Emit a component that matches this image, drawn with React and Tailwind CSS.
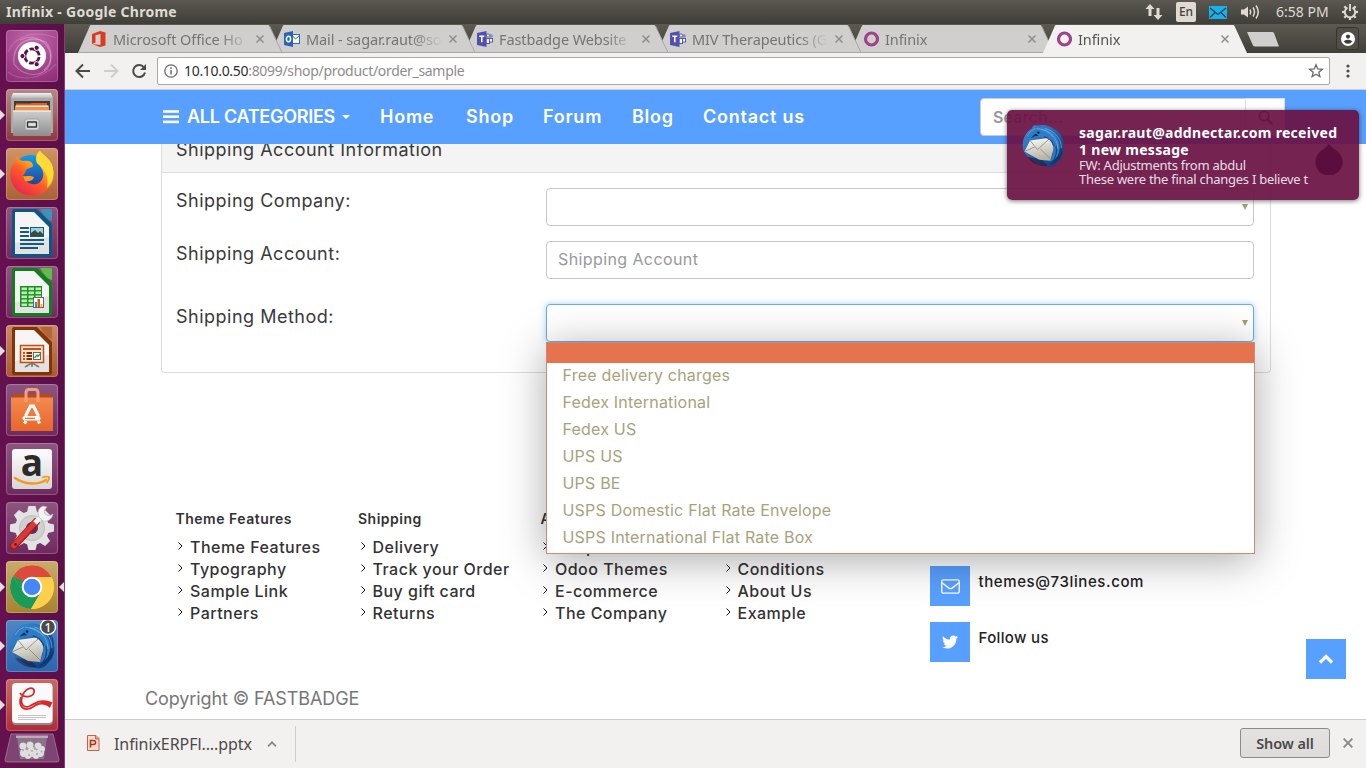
import React from "react";

const UI = "font-['Noto_Sans',sans-serif]";

/* ---------- launcher icons ---------- */
const Spread = () => (
  <svg viewBox="0 0 52 52" className="size-full">
    <g fill="none" stroke="#fff" strokeOpacity=".28" strokeWidth="1.2">
      <path d="M8 34C6 14 22 4 40 12C48 22 46 34 38 40" />
      <path d="M14 10C30 2 48 14 44 34" />
      <path d="M44 34C38 48 18 48 8 34" />
      <path d="M2 22C10 4 30 0 50 8M2 42C12 50 34 52 50 34" strokeOpacity=".15" />
    </g>
    <circle cx="26" cy="26" r="14" fill="#fff" />
    <circle cx="26" cy="26" r="7.2" fill="none" stroke="#5a1145" strokeWidth="2.8" strokeDasharray="13.1 2" strokeDashoffset="-1" />
    <g fill="#5a1145" stroke="#fff" strokeWidth="1">
      <circle cx="16.5" cy="26" r="2.6" />
      <circle cx="30.7" cy="17.8" r="2.6" />
      <circle cx="30.7" cy="34.2" r="2.6" />
    </g>
  </svg>
);
const Files = () => (
  <svg viewBox="0 0 52 52" className="size-full">
    <defs>
      <linearGradient id="cab" x2="0" y2="1"><stop stopColor="#cfcfcf" /><stop offset="1" stopColor="#8d8d8d" /></linearGradient>
      <linearGradient id="lid" x2="0" y2="1"><stop stopColor="#f4f4f4" /><stop offset="1" stopColor="#b9b9b9" /></linearGradient>
    </defs>
    <path d="M8 4H44L47 9V44H5V9Z" fill="#a9a9a9" />
    <path d="M7 4H45L47 9H5Z" fill="url(#lid)" />
    <rect x="8" y="12" width="36" height="12" fill="#3d3a38" />
    <path d="M10 14.500H24L26 14H41V24H10Z" fill="#d9602a" />
    <path d="M9 16.500H43V24H9Z" fill="#f0924a" />
    <rect x="10" y="16.500" width="32" height="1.500" fill="#fbe9d5" />
    <rect x="7" y="21.500" width="38" height="25.500" rx="1" fill="url(#cab)" />
    <rect x="7" y="21.500" width="38" height="1.200" fill="#eee" />
    <rect x="19" y="30" width="14" height="11" rx="2" fill="#d9d9d9" stroke="#9a9a9a" strokeWidth=".8" />
    <rect x="21.500" y="33" width="9" height="5" rx=".5" fill="#ddd" stroke="#333" strokeWidth="1.4" />
  </svg>
);
const Firefox = () => (
  <svg viewBox="0 0 52 52" className="size-full">
    <defs>
      <linearGradient id="ffy" x1=".9" y1="0" x2=".2" y2="1"><stop stopColor="#ffe226" /><stop offset=".35" stopColor="#ffb01d" /><stop offset=".6" stopColor="#ff5a2a" /><stop offset="1" stopColor="#e8214f" /></linearGradient>
      <linearGradient id="ffb" x2="0" y2="1"><stop stopColor="#0aa0ef" /><stop offset="1" stopColor="#2b2f86" /></linearGradient>
    </defs>
    <circle cx="25" cy="25" r="18" fill="url(#ffb)" />
    <path d="M9 14C9 11 10 9 11 8C12 11 14 12 17 13C22 12 27 13 27 18C26 20 22 20 20 22C20 24 18 26 17 28C19 36 30 39 35 33C39 28 38 21 31 15C29 9 31 5 34 3C37 7 44 11 46 17C50 27 47 39 38 44C28 51 13 48 7 37C2 29 4 19 9 14Z" fill="url(#ffy)" />
    <path d="M31 15C29 9 31 5 34 3C37 7 44 11 46 17C49 26 47 34 41 40C43 31 41 23 31 15Z" fill="#ffdb35" />
    <path d="M17 28C20 29 24 27 28 29C27 33 22 34 19 33Z" fill="#ff9a1f" />
  </svg>
);
const Doc = ({ c, d, children }) => (
  <svg viewBox="0 0 52 52" className="size-full">
    <path d="M8 2H31L46 17V48Q46 50 44 50H8Q6 50 6 48V4Q6 2 8 2Z" fill={d} />
    <path d="M34 2H46V14Q40 13 34 2Z" fill={c} />
    <path d="M9 5H28L43 20V47H9Z" fill="#f5f5f5" />
    <path d="M9 36L43 30V47H9Z" fill="#e2e2e2" />
    {children}
  </svg>
);
const Writer = () => (
  <Doc c="#3c93b8" d="#0a5884">
    <g fill="#165a82">
      <rect x="14" y="20" width="9" height="2" /><rect x="14" y="24" width="9" height="2" /><rect x="14" y="28" width="9" height="2" />
      <rect x="14" y="32" width="24" height="2" /><rect x="14" y="36" width="24" height="2" /><rect x="14" y="40" width="18" height="2" />
      <rect x="24" y="20" width="14" height="10" />
    </g>
    <rect x="25" y="21" width="12" height="8" fill="#9bd0ee" />
    <path d="M25 29V26L29 23L32 26L34 24L37 27V29Z" fill="#394d3b" /><circle cx="34.500" cy="23" r="1" fill="#f7d24a" />
  </Doc>
);
const Calc = () => (
  <Doc c="#5cc046" d="#12801a">
    <rect x="14" y="20" width="22" height="21" fill="#1d8f24" />
    <g fill="#b7efae">
      {[21.5, 25.5, 29.5, 33.5, 37.5].map((y) => [15.5, 22.5, 29.5].map((x) => <rect key={x + "-" + y} x={x} y={y} width="5.5" height="2.6" />))}
    </g>
    <rect x="27.500" y="31.500" width="10" height="10" fill="#fff" stroke="#666" />
    <rect x="29" y="36" width="2" height="5" fill="#2c8fd8" /><rect x="31.500" y="33" width="2.500" height="8" fill="#d9561b" /><rect x="34.500" y="38" width="2" height="3" fill="#f2b71c" />
  </Doc>
);
const Impress = () => (
  <Doc c="#b5653a" d="#843406">
    <rect x="14.500" y="20.500" width="23" height="17" fill="#fbe3d2" stroke="#bf4d12" strokeWidth="1.500" />
    <g fill="#c2531a"><rect x="17" y="23" width="18" height="2" /><rect x="17" y="27" width="2" height="2" /><rect x="17" y="30" width="2" height="2" /><rect x="17" y="33" width="2" height="2" /></g>
    <g fill="#7d3005"><rect x="20.500" y="27" width="5.500" height="2" /><rect x="20.500" y="30" width="5.500" height="2" /><rect x="20.500" y="33" width="5.500" height="2" /></g>
    <rect x="27.500" y="27.500" width="7" height="7" fill="#fff" stroke="#666" /><path d="M28.500 33L31 30L32 31.500L34 29" stroke="#2a9b2a" strokeWidth="1.300" fill="none" />
    <path d="M19 42L24 39H28L33 42M26 38V42" stroke="#777" strokeWidth="1.600" fill="none" />
  </Doc>
);
const Software = () => (
  <svg viewBox="0 0 52 52" className="size-full">
    <defs><linearGradient id="bag" x2="0" y2="1"><stop stopColor="#f38a4d" /><stop offset="1" stopColor="#e9662a" /></linearGradient></defs>
    <path d="M7 10H45L47 14H5Z" fill="#b9491b" />
    <path d="M5 13.500H47V47H5Z" fill="url(#bag)" />
    <path d="M20 18V9Q20 5.500 23 5.500H29Q32 5.500 32 9V18" fill="none" stroke="#f0a17c" strokeWidth="3" />
    <path d="M19.500 32L24.500 22H27.500L32.500 32M20 37L18.500 39.500M32.500 37L33.500 39.500" fill="none" stroke="#fff" strokeWidth="3.200" />
    <rect x="16.500" y="32" width="18" height="4.600" rx="2.300" fill="#fff" /><path d="M19 34.300H29" stroke="#e9662a" strokeWidth="1.200" />
  </svg>
);
const Amazon = () => (
  <svg viewBox="0 0 52 52" className="size-full">
    <defs><linearGradient id="az" x2="0" y2="1"><stop stopColor="#fdfdfd" /><stop offset="1" stopColor="#d7d7d7" /></linearGradient></defs>
    <rect x="6" y="6" width="40" height="40" rx="3" fill="url(#az)" />
    <text x="26" y="32.500" textAnchor="middle" fontFamily="Open Sans" fontWeight="700" fontSize="37" fill="#2b2b2b">a</text>
    <path d="M9 35C19 42 32 42 40 37" fill="none" stroke="#f79a1c" strokeWidth="2.600" strokeLinecap="round" />
    <path d="M36 34.500Q40 33 43 34Q43.500 37 40.500 40" fill="none" stroke="#f79a1c" strokeWidth="1.800" />
  </svg>
);
const Settings = () => (
  <svg viewBox="0 0 52 52" className="size-full">
    <g fill="#e3e3e3">
      {[0, 45, 90, 135].map((a) => <path key={a} transform={`rotate(${a} 26 26)`} d="M21 10L22.500 4H29.500L31 10V42L29.500 48H22.500L21 42Z" />)}
      <circle cx="26" cy="26" r="17" />
    </g>
    <circle cx="26" cy="26" r="12.500" fill="#d0d0d0" stroke="#bdbdbd" />
    <circle cx="26" cy="26" r="6" fill="#6e2a5c" />
    <path d="M7.500 44.500L30 20" stroke="#a11b1b" strokeWidth="7.500" strokeLinecap="round" />
    <path d="M8 43.500L30 19.500" stroke="#d93a38" strokeWidth="5.500" strokeLinecap="round" />
    <path d="M29 21L36 14" stroke="#f2f2f2" strokeWidth="5" />
    <path d="M37 4C32 6 31 11 33 15L37 19C42 20 46 17 47 12L43 14L39 12L38 9L41 5Z" fill="#f4f4f4" stroke="#b5b5b5" strokeWidth=".7" />
    <circle cx="9.500" cy="42.500" r="1.400" fill="#801515" />
  </svg>
);
const Chrome = () => (
  <svg viewBox="0 0 52 52" className="size-full">
    <circle cx="26" cy="26" r="22" fill="#fdd04b" />
    <path d="M26 16H45.500A22 22 0 0 0 7 15L26 26Z" fill="#dc4a3d" />
    <path d="M7 15A22 22 0 0 0 25 48L35 31L26 26L17.500 31Z" fill="#1b9b5a" />
    <path d="M7 15L17.500 32L21 22Z" fill="#1b9b5a" />
    <path d="M26 16H45.500A22 22 0 0 1 25 48L35 31Z" fill="#fdd04b" />
    <circle cx="26" cy="26" r="10.300" fill="#fff" />
    <circle cx="26" cy="26" r="8.300" fill="#4587f4" />
  </svg>
);
const Bird = ({ badge }) => (
  <svg viewBox="0 0 52 52" className="size-full">
    <defs>
      <linearGradient id="tb" x2="1" y2="1"><stop stopColor="#3f93d8" /><stop offset=".55" stopColor="#1f5ea8" /><stop offset="1" stopColor="#102f66" /></linearGradient>
      <linearGradient id="env" x2=".3" y2="1"><stop stopColor="#fff" /><stop offset="1" stopColor="#b9b4a6" /></linearGradient>
    </defs>
    <path d="M14 7C15 4 17 3 19 4C27 2 33 4 37 7C43 9 49 17 48 26C49 32 47 39 42 43C39 48 32 50 28 47C22 47 17 43 14 40C8 38 4 32 4 26C4 18 7 11 14 7Z" fill="url(#tb)" />
    <path d="M9 38C15 46 24 49 31 47L24 40Z" fill="#1c0f1c" fillOpacity=".45" />
    <path d="M12 20L33 17L38 27L34 42L22 41L6 32Z" fill="url(#env)" />
    <path d="M12 20L20 30L33 18M6 32L17 27M23 29L35 41" fill="none" stroke="#8e8a80" strokeWidth=".9" />
    <path d="M11 19C16 15 20 16 24 17C31 15 36 20 37 27C38 33 36 38 33 43C41 41 45 34 44 26C43 15 34 6 24 5C17 5 11 8 8 14C5 19 4 24 5 29C6 25 8 22 11 19Z" fill="#2f7cc4" />
    <path d="M13 17L18 12.500L21 15Q17 15 13 17Z" fill="#0d2b55" /><circle cx="21" cy="11.500" r="1.300" fill="#0b1d3c" />
    <g fill="none" stroke="#7cbdee" strokeOpacity=".65"><path d="M24 8C34 9 42 18 42 29M28 7C38 9 46 18 46 28M19 7Q30 8 37 16M9 15Q12 9 18 7" /></g>
    <g fill="none" stroke="#0f3264" strokeOpacity=".75" strokeWidth="1.300"><path d="M34 46Q44 40 45 29M37 42Q42 35 40 26M27 16Q35 18 38 26M38 44Q46 37 47 31" /></g>
    {badge && <><circle cx="42" cy="7" r="7.500" fill="#4a4a4a" stroke="#fff" strokeWidth="1.400" />
      <text x="42" y="11.500" textAnchor="middle" fontFamily="Noto Sans" fontWeight="500" fontSize="12" fill="#fff">1</text></>}
  </svg>
);
const Pdf = () => (
  <svg viewBox="0 0 52 52" className="size-full">
    <rect x="6" y="5" width="41" height="41" rx="4" fill="#8f8f8f" />
    <rect x="6" y="4" width="40.500" height="40" rx="4" fill="#fafafa" />
    <path d="M14 14C18 20 30 18 28 11C26 7 18 10 16 18C14 25 18 30 24 27C31 23 36 20 46 24" fill="none" stroke="#d9272b" strokeWidth="1.800" />
    <path d="M16 18C13 26 18 32 25 28C31 24 36 21 46 24L44 29C37 23 31 26 26 29.500C17 34 11 27 14 18Z" fill="#d9272b" />
    <path d="M12 36.500H40M12 38.500H40M12 40.500H30" stroke="#c4c4c4" strokeWidth="1" />
  </svg>
);

const TILES = [
  { I: Spread, bg: "bg-[radial-gradient(circle_at_50%_20%,#c46aae,#8b2a74)]" },
  { I: Files, bg: "bg-linear-to-b from-[#b48a86] to-[#8e3540]", run: true },
  { I: Firefox, bg: "bg-linear-to-b from-[#cf9466] to-[#aa6237]", run: true },
  { I: Writer, bg: "bg-linear-to-b from-[#8d5580] to-[#6f2a60]" },
  { I: Calc, bg: "bg-linear-to-b from-[#8d5580] to-[#6f2a60]" },
  { I: Impress, bg: "bg-linear-to-b from-[#c98a68] to-[#a85930]", run: true },
  { I: Software, bg: "bg-linear-to-b from-[#8d5580] to-[#6f2a60]" },
  { I: Amazon, bg: "bg-linear-to-b from-[#8d5580] to-[#6f2a60]" },
  { I: Settings, bg: "bg-linear-to-b from-[#8d5580] to-[#6f2a60]" },
  { I: Chrome, bg: "bg-linear-to-b from-[#c9ac6b] to-[#a6832e]", run: true, focus: true },
  { I: () => <Bird badge />, bg: "bg-linear-to-b from-[#4f87c4] to-[#2d65ae]", run: true },
  { I: Pdf, bg: "bg-linear-to-b from-[#c76a66] to-[#b02a35]", run: true },
];

const Launcher = () => (
  <aside className="relative flex w-[65px] shrink-0 flex-col gap-[7px] border-r border-[#86406f] bg-linear-to-r from-[#66114f] to-[#5b0f48] pt-[6px]">
    {TILES.map(({ I, bg, run, focus }, i) => (
      <div key={i} className="flex h-[52px] items-center">
        <svg viewBox="0 0 6 10" className="h-[10px] w-[6px] shrink-0">{run && <path d="M0 0L5 5L0 10Z" fill="#e3dfdf" />}</svg>
        <div className={`size-[52px] shrink-0 rounded-[4px] shadow-[inset_0_0_0_1px_rgba(255,255,255,0.22)] ${bg}`}><I /></div>
        <svg viewBox="0 0 6 10" className="h-[10px] w-[6px] shrink-0">{focus && <path d="M6 0L1 5L6 10Z" fill="#e3dfdf" />}</svg>
      </div>
    ))}
    <svg viewBox="0 0 56 30" className="-mt-[5px] ml-[4px] h-[30px] w-[56px] shrink-0">
      <path d="M7 1H49L55 27Q55 29 53 29H3Q1 29 1 27Z" fill="#7e4473" stroke="#a37a9a" strokeWidth=".8" />
      <path d="M13 4H43L40 26H16Z" fill="#8d7288" />
      <path d="M12 2.500H44V5H12Z" fill="#b9adb7" />
      <g fill="#dedede"><circle cx="19" cy="13" r="3.500" /><circle cx="26" cy="12" r="3.500" /><circle cx="34" cy="13" r="3.500" /><circle cx="38" cy="16" r="3" /><circle cx="20" cy="20" r="4" /><circle cx="28" cy="19" r="5" /><circle cx="36" cy="20" r="4" /><circle cx="24" cy="23" r="3" /><circle cx="32" cy="23" r="3" /></g>
      <g fill="#a9a3a8"><circle cx="23" cy="15.500" r="1.200" /><circle cx="31" cy="15.500" r="1.200" /><circle cx="25" cy="22" r="1" /><circle cx="33" cy="21" r="1.100" /><circle cx="37.500" cy="18.500" r=".9" /><circle cx="19" cy="17" r="1" /><circle cx="28" cy="18" r=".9" /></g>
    </svg>
  </aside>
);

/* ---------- top panel ---------- */
const TopPanel = () => (
  <header className={`flex h-[24px] shrink-0 items-center bg-linear-to-b from-[#5a5850] to-[#3f3e39] pl-[6px] text-[#dfdbd2] ${UI}`}>
    <span className="grow text-[14px] leading-[20px] font-bold tracking-[0.27px]">Infinix - Google Chrome</span>
    <svg viewBox="0 0 18 18" className="mr-[13px] size-[18px]" fill="#dfdbd2">
      <path d="M5 1L9.500 6H6.500V13H3.500V6H.5Z" /><path d="M13 17L17.500 12H14.500V5H11.500V12H8.500Z" />
    </svg>
    <span className="mr-[13px] flex h-[20px] w-[20px] items-center justify-center rounded-[2px] bg-[#dfdbd2] text-[12px] font-medium text-[#45433e]">En</span>
    <svg viewBox="0 0 18 13" className="mr-[13px] h-[13px] w-[18px]">
      <rect width="18" height="13" fill="#19b1ec" /><path d="M1 2L9 8.500L17 2M1 11.500L6 6.500M17 11.500L12 6.500" fill="none" stroke="#33424a" strokeWidth="1.300" />
    </svg>
    <svg viewBox="0 0 20 18" className="mr-[16px] h-[18px] w-[20px]">
      <path d="M1 6.500H4L8 3.500V14.500L4 11.500H1Z" fill="#dfdbd2" />
      <g fill="none" stroke="#dfdbd2" strokeWidth="1.500"><path d="M10 6.500Q11.500 9 10 11.500" /><path d="M13 4.500Q16 9 13 13.500" /><path d="M16 2.500Q20.500 9 16 15.500" /></g>
    </svg>
    <span className="w-[65px] text-[14px] leading-[20px]">6:58 PM</span>
    <svg viewBox="0 0 18 18" className="mr-[7px] size-[18px]">
      <g stroke="#dfdbd2" strokeWidth="2.200">
        {[45, 90, 135, 180, 225, 270, 315].map((a) => <path key={a} transform={`rotate(${a} 9 9)`} d="M9 1V4" />)}
      </g>
      <path d="M6.500 4.600A5.200 5.200 0 1 0 11.500 4.600" fill="none" stroke="#dfdbd2" strokeWidth="1.900" />
      <path d="M9 1V8" stroke="#dfdbd2" strokeWidth="1.900" />
    </svg>
  </header>
);

/* ---------- browser tabs ---------- */
const Office = () => <svg viewBox="0 0 16 16" className="size-[16px]"><path d="M1 3L9 0L14.500 1.500V14.500L9 16L1 13L9.500 14V3L4.500 4.300V11.500L1 13Z" fill="#dc3b21" /></svg>;
const Outlook = () => (
  <svg viewBox="0 0 16 16" className="size-[16px]">
    <rect x="8" y="3.500" width="7.500" height="9" fill="#fff" stroke="#2b66b8" /><path d="M8 4.500L11.500 8L15.500 4.500" fill="none" stroke="#2b66b8" />
    <path d="M0 2L9 0V16L0 14Z" fill="#2764ba" /><ellipse cx="4.500" cy="8" rx="2.100" ry="2.700" fill="none" stroke="#fff" strokeWidth="1.500" />
  </svg>
);
const Teams = () => (
  <svg viewBox="0 0 16 16" className="size-[16px]">
    <g fill="#fff" stroke="#5558af"><circle cx="11" cy="4.500" r="1.600" /><circle cx="14" cy="5" r="1.200" /><rect x="9" y="7.500" width="3.500" height="5" /><rect x="12.500" y="7.500" width="3" height="3.500" /></g>
    <path d="M0 2L9.500 0V16L0 14Z" fill="#5451ad" />
    <path d="M2.300 5.300H7.300M4.800 5.300V11.300" stroke="#fff" strokeWidth="1.500" />
  </svg>
);
const Ring = () => <svg viewBox="0 0 16 16" className="size-[16px]"><circle cx="8.500" cy="8" r="6" fill="none" stroke="#9c4489" strokeWidth="3.200" /></svg>;
const Cross = ({ cls }) => <svg viewBox="0 0 8 8" className={cls}><path d="M.5.5L7.500 7.500M7.500.5L.5 7.500" stroke="currentColor" strokeWidth="1.500" /></svg>;

const TABS = [
  { t: "Microsoft Office Ho", I: Office, z: "z-[6]" },
  { t: "Mail - sagar.raut@so", I: Outlook, z: "z-[5]" },
  { t: "Fastbadge Website", I: Teams, z: "z-[4]" },
  { t: "MIV Therapeutics (G", I: Teams, z: "z-[3]" },
  { t: "Infinix", I: Ring, z: "z-[2]" },
  { t: "Infinix", I: Ring, z: "z-[7]", on: true },
];
const TabStrip = () => (
  <div className={`flex h-[29px] shrink-0 bg-linear-to-b from-[#5c5a50] to-[#403f3a] pl-[13px] ${UI}`}>
    {TABS.map(({ t, I, z, on }, i) => (
      <div key={i} className={`relative -mr-[12px] flex w-[205px] shrink-0 items-center ${z}`}>
        <svg viewBox="0 0 205 29" className="absolute inset-0 h-[29px] w-[205px]">
          <path d="M0 29L12 1.500Q12.500 1 13 1H190Q191 1 191.500 2L204 29Z" fill={on ? "#f2f1f0" : "#d1cfcd"} />
          {!on && <path d="M0 28.500H204L191.500 2" fill="none" stroke="#a9a7a4" />}
        </svg>
        <span className="relative ml-[13px] flex w-[22px] justify-start"><I /></span>
        <span className={`relative w-[136px] overflow-hidden mask-[linear-gradient(to_right,#000_108px,transparent_136px)] text-[14.500px] leading-[20px] tracking-[-0.1px] whitespace-nowrap ${on ? "text-[#55534f]" : "text-[#767472]"}`}>{t}</span>
        <Cross cls="relative ml-[7px] size-[8px] text-[#8f8d8a]" />
      </div>
    ))}
    <svg viewBox="0 0 34 17" className="mt-[7px] ml-[10px] h-[17px] w-[34px]"><path d="M1 1H26Q27.500 1 28 2L33 15.500H9Q7.500 15.500 7 14.500Z" fill="#d1cfcd" /></svg>
    <span className="mt-[3px] mr-[7px] ml-auto flex size-[23px] items-center justify-center rounded-[3px] border border-[#37352f] bg-[#504e47]">
      <svg viewBox="0 0 14 14" className="size-[14px]"><circle cx="7" cy="7" r="7" fill="#fff" /><circle cx="7" cy="4.600" r="2.100" fill="#3f3e39" /><path d="M2.800 9.200Q7 6.400 11.200 9.200Q10 11.700 7 11.700Q4 11.700 2.800 9.200Z" fill="#3f3e39" /></svg>
    </span>
  </div>
);

const Toolbar = () => (
  <div className={`flex h-[37px] shrink-0 items-center border-b border-[#cfcdca] bg-[#f2f1f0] pl-[10px] ${UI}`}>
    <svg viewBox="0 0 16 16" className="size-[16px]"><path d="M15 8H2M8 1.500L1.500 8L8 14.500" fill="none" stroke="#4b4a48" strokeWidth="2" /></svg>
    <svg viewBox="0 0 16 16" className="ml-[12px] size-[16px]"><path d="M1 8H14M8 1.500L14.500 8L8 14.500" fill="none" stroke="#cfcecc" strokeWidth="2" /></svg>
    <svg viewBox="0 0 16 16" className="ml-[12px] size-[16px]"><path d="M13 4.500A6 6 0 1 0 14 9.500" fill="none" stroke="#4b4a48" strokeWidth="2" /><path d="M15 1V7H9Z" fill="#4b4a48" /></svg>
    <div className="ml-[10px] flex h-[28px] w-[1173px] items-center rounded-[2px] border border-[#aaa8a6] bg-white pl-[6px]">
      <svg viewBox="0 0 14 14" className="size-[14px]"><circle cx="7" cy="7" r="6.200" fill="none" stroke="#6b6a68" strokeWidth="1.300" /><path d="M7 6V10.500M7 3.300V4.900" stroke="#6b6a68" strokeWidth="1.500" /></svg>
      <span className="ml-[6px] grow text-[14px] leading-[20px] tracking-[-0.31px] text-[#8e8c8a]"><span className="text-[#2f2e2d]">10.10.0.50</span>:8099/shop/product/order_sample</span>
      <svg viewBox="0 0 16 16" className="mr-[5px] size-[16px]"><path d="M8 1.800L9.700 6L14.300 6.300L10.800 9.200L11.900 13.700L8 11.200L4.100 13.700L5.200 9.200L1.700 6.300L6.300 6Z" fill="none" stroke="#6b6a68" strokeWidth="1.300" /></svg>
    </div>
    <svg viewBox="0 0 4 14" className="ml-[16px] h-[14px] w-[4px]" fill="#4b4a48"><circle cx="2" cy="2" r="1.600" /><circle cx="2" cy="7" r="1.600" /><circle cx="2" cy="12" r="1.600" /></svg>
  </div>
);

/* ---------- site ---------- */
const SiteNav = () => (
  <nav className="flex h-[54px] shrink-0 items-center bg-[#58a0ff] pl-[98px] text-[18px] leading-[24px] font-semibold tracking-[0.75px] whitespace-nowrap text-white">
    <svg viewBox="0 0 16 14" className="mr-[8px] h-[14px] w-[16px] shrink-0" fill="#fff"><rect width="16" height="2.600" y=".2" /><rect width="16" height="2.600" y="5.400" /><rect width="16" height="2.600" y="10.600" /></svg>
    <span className="w-[155px] shrink-0 tracking-[-0.27px]">ALL CATEGORIES</span>
    <svg viewBox="0 0 8 4" className="mr-[30px] h-[4px] w-[8px] shrink-0"><path d="M0 0H8L4 4Z" fill="#fff" /></svg>
    <span className="w-[86px] shrink-0">Home</span>
    <span className="w-[77px] shrink-0">Shop</span>
    <span className="w-[89px] shrink-0">Forum</span>
    <span className="w-[71px] shrink-0">Blog</span>
    <span className="w-[277px] shrink-0">Contact us</span>
    <div className="flex h-[38px] w-[266px] shrink-0 items-center rounded-l-[4px] border border-[#ccc] bg-white pl-[12px] text-[16px] tracking-[0.1px] text-[#999]">Search...</div>
    <div className="-ml-px flex h-[38px] w-[40px] shrink-0 items-center justify-center border border-[#ddd] bg-white">
      <svg viewBox="0 0 16 16" className="size-[15px]"><circle cx="6.500" cy="6.500" r="5" fill="none" stroke="#333" strokeWidth="2" /><path d="M10.500 10.500L14.500 14.500" stroke="#333" strokeWidth="2.500" strokeLinecap="round" /></svg>
    </div>
  </nav>
);

const OPTIONS = ["Free delivery charges", "Fedex International", "Fedex US", "UPS US", "UPS BE", "USPS Domestic Flat Rate Envelope", "USPS International Flat Rate Box"];
const Caret = () => <svg viewBox="0 0 6 6" className="size-[6px]"><path d="M0 0H6L3 6Z" fill="#a39f78" /></svg>;

const Row = ({ label, children }) => (
  <div className="flex h-[38px]">
    <span className="w-[370px] shrink-0 text-[18px] leading-[25px] tracking-[0.5px]">{label}</span>
    {children}
  </div>
);

const ShippingPanel = () => (
  <section className="ml-[96px] h-[229px] w-[1110px] shrink-0 rounded-b-[4px] border border-t-0 border-[#ddd] bg-white text-[#3a3a3a]">
    <h3 className="h-[29px] overflow-hidden border-b border-[#ddd] bg-[#f4f4f4] pl-[14px] text-[18px] leading-[11px] tracking-[0.5px]">Shipping Account Information</h3>
    <div className="flex flex-col gap-[15px] pt-[15px] pl-[14px]">
      <Row label="Shipping Company:">
        <div className="flex h-[38px] w-[708px] items-center justify-end rounded-[4px] border border-[#c8c8c8] bg-white pr-[5px]"><Caret /></div>
      </Row>
      <Row label="Shipping Account:">
        <div className="flex h-[38px] w-[708px] items-center rounded-[4px] border border-[#c8c8c8] bg-white pb-[2px] pl-[11px] text-[16px] tracking-[0.4px] text-[#999]">Shipping Account</div>
      </Row>
      <div className="mt-[10px]">
        <Row label="Shipping Method:">
          <div className="relative flex h-[38px] w-[708px] items-center justify-end rounded-[4px] border border-[#66afe9] bg-white pr-[5px] shadow-[0_0_6px_rgba(102,175,233,0.55)]">
            <Caret />
            <div className="absolute top-[37px] -left-px z-20 h-[212px] w-[709px] border border-[#c98b78] bg-white shadow-[0_6px_40px_rgba(0,0,0,0.34)]">
              <div className="h-[20px] bg-[#e5734e]" />
              {OPTIONS.map((o) => <div key={o} className="h-[27px] pl-[15.500px] text-[16px] leading-[24px] tracking-[0.2px] text-[#a8a27c]">{o}</div>)}
            </div>
          </div>
        </Row>
      </div>
    </div>
  </section>
);

const COLS = [
  ["Theme Features", ["Theme Features", "Typography", "Sample Link", "Partners"]],
  ["Shipping", ["Delivery", "Track your Order", "Buy gift card", "Returns"]],
  ["A", ["Shop", "Odoo Themes", "E-commerce", "The Company"]],
  ["\u00a0", ["\u00a0", "Conditions", "About Us", "Example"]],
];
const Footer = () => (
  <footer className="mt-[135px]">
    <div className="flex pl-[110.500px]">
      {COLS.map(([h, ls]) => (
        <div key={h} className="w-[182.500px] shrink-0 text-[#333]">
          <h4 className="mb-[6px] text-[14px] leading-[22px] font-semibold tracking-[0.5px]">{h}</h4>
          {ls.map((l) => (
            <div key={l} className="flex items-center pl-[2.500px] text-[16px] leading-[22px] font-medium tracking-[0.48px] whitespace-nowrap">
              <svg viewBox="0 0 5 8" className="mr-[7px] mb-[2px] h-[8px] w-[5px] shrink-0"><path d="M.5.5L4 4L.5 7.500" fill="none" stroke="#111" /></svg>{l}
            </div>
          ))}
        </div>
      ))}
      <div className="ml-[24.500px] flex flex-col gap-[16px] pt-[58px] text-[15px] leading-[31px] font-medium tracking-[0.6px] text-[#222]">
        <div className="flex h-[40px] gap-[8.500px]">
          <span className="flex size-[40px] items-center justify-center bg-[#58a0ff]">
            <svg viewBox="0 0 18 14" className="h-[15px] w-[19px]"><rect x=".7" y=".7" width="16.600" height="12.600" rx="1.500" fill="none" stroke="#fff" strokeWidth="1.300" /><path d="M1 3.500L7.500 8.500Q9 9.500 10.500 8.500L17 3.500" fill="none" stroke="#fff" strokeWidth="1.300" /></svg>
          </span>
          themes@73lines.com
        </div>
        <div className="flex h-[40px] gap-[8.500px] tracking-[0.35px]">
          <span className="flex size-[40px] items-center justify-center bg-[#58a0ff]">
            <svg viewBox="0 0 24 24" className="size-[16px]" fill="#fff"><path d="M24 4.600a10 10 0 0 1-2.800.8 5 5 0 0 0 2.200-2.700 10 10 0 0 1-3.100 1.200A4.900 4.900 0 0 0 11.900 8.400 14 14 0 0 1 1.700 3.200a4.900 4.900 0 0 0 1.500 6.600 5 5 0 0 1-2.200-.6 4.900 4.900 0 0 0 3.900 4.900 5 5 0 0 1-2.200.1 4.900 4.900 0 0 0 4.600 3.400A9.900 9.900 0 0 1 0 19.600 14 14 0 0 0 7.500 21.800c9.100 0 14.300-7.700 14-14.600A10 10 0 0 0 24 4.600z" /></svg>
          </span>
          Follow us
        </div>
      </div>
    </div>
    <p className="mt-[24px] ml-[80px] text-[18px] leading-[25px] tracking-[-0.1px] text-[#777]">Copyright © FASTBADGE</p>
  </footer>
);

const Downloads = () => (
  <div className={`flex h-[49px] shrink-0 items-center border-t border-[#cfcdca] bg-[#f2f1f0] pl-[21px] ${UI}`}>
    <svg viewBox="0 0 14 16" className="mb-[2px] h-[16px] w-[14px]">
      <path d="M1.500.5H10L13 3.500V15.500H1.500Z" fill="#f7d9cd" stroke="#b9553a" strokeWidth=".9" /><path d="M9.500.5V4H13" fill="#e7a188" stroke="#b9553a" strokeWidth=".8" />
      <path d="M4.500 12.500V5.500H7Q9.600 5.500 9.600 7.600Q9.600 9.600 7 9.600H4.500" fill="none" stroke="#a9341b" strokeWidth="1.500" />
    </svg>
    <span className="ml-[14px] w-[153px] text-[16px] leading-[24px] tracking-[-0.08px] text-[#4c4a48]">InfinixERPFl....pptx</span>
    <svg viewBox="0 0 10 6" className="h-[6px] w-[10px]"><path d="M1 5.300L5 1.300L9 5.300" fill="none" stroke="#8a8886" strokeWidth="1.700" /></svg>
    <span className="ml-[18px] h-[36px] w-px bg-[#cfcdca]" />
    <button className="mb-[2px] ml-auto h-[30px] w-[90px] rounded-[3px] border border-[#8c8a87] bg-linear-to-b from-[#e4e2e0] to-[#dedcda] text-[14.500px] leading-[20px] font-semibold tracking-[-0.1px] text-[#4c4a48]">Show all</button>
    <Cross cls="mr-[13px] mb-[2px] ml-[13px] size-[10px] text-[#8a8886]" />
  </div>
);

const Notification = () => (
  <div className={`absolute top-[110px] left-[1007px] z-30 flex h-[90px] w-[352px] rounded-[5px] bg-[rgba(107,18,68,0.93)] shadow-[0_1px_5px_rgba(0,0,0,0.55)] ${UI}`}>
    <div className="mt-[12px] ml-[12px] size-[48px] shrink-0"><Bird /></div>
    <div className="mt-[14px] ml-[12px] whitespace-nowrap text-white">
      <p className="text-[14px] leading-[17px] font-bold tracking-[0.3px]">sagar.raut@addnectar.com received<br />1 new message</p>
      <p className="text-[13px] leading-[14px] tracking-[-0.27px] text-[#e9dfe5]">FW: Adjustments from abdul<br />These were the final changes I believe t</p>
    </div>
    <svg viewBox="0 0 28 32" className="absolute top-[34px] left-[308px] h-[31px] w-[28px]"><path d="M14 0Q17 4 22 7A14 14 0 1 1 6 7Q11 4 14 0Z" fill="#5b0d3d" /></svg>
  </div>
);

export default function App() {
  return (
    <div className="relative flex h-[768px] w-[1366px] flex-col overflow-hidden bg-white font-[Inter,sans-serif]">
      <TopPanel />
      <div className="flex min-h-0 grow">
        <Launcher />
        <div className="flex w-[1301px] flex-col">
          <TabStrip />
          <Toolbar />
          <SiteNav />
          <main className="relative flex h-[575px] shrink-0 flex-col overflow-hidden">
            <ShippingPanel />
            <Footer />
            <button className="absolute top-[495px] right-[20px] flex size-[40px] items-center justify-center bg-[#58a0ff]">
              <svg viewBox="0 0 16 10" className="h-[10px] w-[16px]"><path d="M2 8.500L8 2.500L14 8.500" fill="none" stroke="#fff" strokeWidth="3.200" /></svg>
            </button>
          </main>
          <Downloads />
        </div>
      </div>
      <Notification />
    </div>
  );
}
